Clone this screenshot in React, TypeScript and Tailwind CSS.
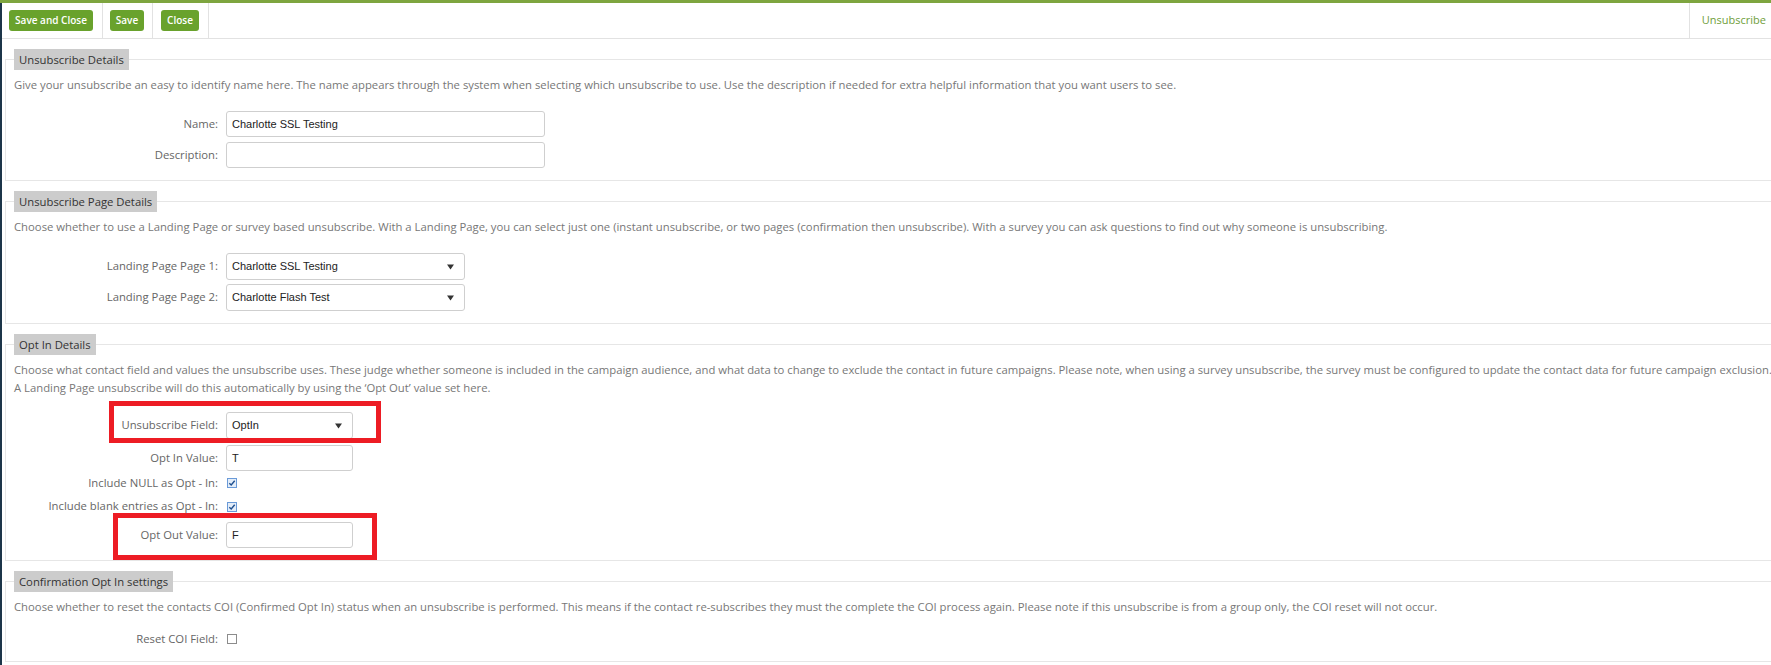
import { ReactNode } from 'react'
import clsx from 'clsx'

function ToolButton({ children, width }: { children: ReactNode; width: string }) {
    return (
        <button
            className={clsx(
                'h-[21px] rounded-[3px] bg-[#69a22c] text-center text-[10px] font-semibold leading-[21px] text-white',
                width
            )}
        >
            {children}
        </button>
    )
}

function Section({ title, children }: { title: string; children: ReactNode }) {
    return (
        <fieldset className="ml-[3px] mt-[10px] border border-r-0 border-[#e6e6e6] px-[8px] pb-[12px]">
            <legend className="h-[21px] bg-[#cccccc] px-[5px] text-[11.3px] leading-[21px] text-[#333]">
                {title}
            </legend>
            {children}
        </fieldset>
    )
}

function Row({
    label,
    children,
    className,
}: {
    label: string
    children: ReactNode
    className?: string
}) {
    return (
        <div className={clsx('relative grid grid-cols-[204px_auto] items-center gap-x-[8px]', className)}>
            <span className="whitespace-nowrap text-right text-[11.3px] text-[#666]">{label}</span>
            <div className="flex items-center">{children}</div>
        </div>
    )
}

function TextBox({ value, width }: { value?: string; width: string }) {
    return (
        <div
            className={clsx(
                'flex h-[26px] items-center rounded-[3px] border border-[#cfcfcf] bg-white px-[5px] font-["Liberation_Sans",Arial,sans-serif] text-[11px] text-[#222]',
                width
            )}
        >
            {value}
        </div>
    )
}

function SelectBox({ value, width }: { value: string; width: string }) {
    return (
        <div
            className={clsx(
                'flex h-[27px] items-center justify-between rounded-[3px] border border-[#cfcfcf] bg-white pl-[5px] pr-[10px] font-["Liberation_Sans",Arial,sans-serif] text-[11px] text-[#222]',
                width
            )}
        >
            <span>{value}</span>
            <svg width="7" height="6" viewBox="0 0 7 6">
                <path d="M0 0.5 H7 L3.5 5.5 Z" fill="#333" />
            </svg>
        </div>
    )
}

function CheckBox({ checked }: { checked?: boolean }) {
    return (
        <span
            className={clsx(
                'ml-[1px] inline-flex h-[10px] w-[10px] items-center justify-center border',
                checked ? 'border-[#6a9ad8] bg-[#e3edf9]' : 'border-[#8c8c8c] bg-white'
            )}
        >
            {checked && (
                <svg width="8" height="8" viewBox="0 0 8 8">
                    <path d="M1.3 4.2 L3.2 6 L6.7 1.8" stroke="#1f4f8f" strokeWidth="1.4" fill="none" />
                </svg>
            )}
        </span>
    )
}

function Desc({ children }: { children: ReactNode }) {
    return (
        <p className="mt-[6px] whitespace-nowrap text-[11.3px] leading-[18px] text-[#777]">{children}</p>
    )
}

export default function App() {
    return (
        <div className="w-[1771px] min-h-[665px] bg-white font-['Open_Sans',sans-serif]">
            <div className="h-[3px] bg-[#7ea53f]" />
            <div className="min-h-[662px] border-l-2 border-[#1c3549]">
                <div className="flex h-[36px] items-stretch border-b border-[#e2e2e2]">
                    <div className="flex items-center border-r border-[#e2e2e2] pl-[7px] pr-[9px]">
                        <ToolButton width="w-[84px]">Save and Close</ToolButton>
                    </div>
                    <div className="flex items-center border-r border-[#e2e2e2] pl-[7px] pr-[8px]">
                        <ToolButton width="w-[34px]">Save</ToolButton>
                    </div>
                    <div className="flex items-center border-r border-[#e2e2e2] pl-[8px] pr-[9px]">
                        <ToolButton width="w-[38px]">Close</ToolButton>
                    </div>
                    <div className="ml-auto flex items-center border-l border-[#e2e2e2] pl-[12px] pr-[5px] text-[11px] text-[#6f9e3a]">
                        Unsubscribe
                    </div>
                </div>

                <Section title="Unsubscribe Details">
                    <Desc>
                        Give your unsubscribe an easy to identify name here. The name appears through the system
                        when selecting which unsubscribe to use. Use the description if needed for extra helpful
                        information that you want users to see.
                    </Desc>
                    <div className="mt-[17px] flex flex-col gap-[5px]">
                        <Row label="Name:">
                            <TextBox value="Charlotte SSL Testing" width="w-[319px]" />
                        </Row>
                        <Row label="Description:">
                            <TextBox width="w-[319px]" />
                        </Row>
                    </div>
                </Section>

                <Section title="Unsubscribe Page Details">
                    <Desc>
                        Choose whether to use a Landing Page or survey based unsubscribe. With a Landing Page, you
                        can select just one (instant unsubscribe, or two pages (confirmation then unsubscribe). With
                        a survey you can ask questions to find out why someone is unsubscribing.
                    </Desc>
                    <div className="mt-[17px] flex flex-col gap-[4px]">
                        <Row label="Landing Page Page 1:">
                            <SelectBox value="Charlotte SSL Testing" width="w-[239px]" />
                        </Row>
                        <Row label="Landing Page Page 2:">
                            <SelectBox value="Charlotte Flash Test" width="w-[239px]" />
                        </Row>
                    </div>
                </Section>

                <Section title="Opt In Details">
                    <Desc>
                        Choose what contact field and values the unsubscribe uses. These judge whether someone is
                        included in the campaign audience, and what data to change to exclude the contact in future
                        campaigns. Please note, when using a survey unsubscribe, the survey must be configured to
                        update the contact data for future campaign exclusion.
                        <br />
                        A Landing Page unsubscribe will do this automatically by using the &lsquo;Opt Out&rsquo;
                        value set here.
                    </Desc>
                    <div className="mt-[15px] flex flex-col">
                        <Row label="Unsubscribe Field:">
                            <SelectBox value="OptIn" width="w-[127px]" />
                            <div className="pointer-events-none absolute left-[95px] top-[-11px] z-10 h-[42px] w-[272px] border-[5px] border-[#ed1c24]" />
                        </Row>
                        <Row label="Opt In Value:" className="mt-[6px]">
                            <TextBox value="T" width="w-[127px]" />
                        </Row>
                        <Row label="Include NULL as Opt - In:" className="h-[24px]">
                            <CheckBox checked />
                        </Row>
                        <Row label="Include blank entries as Opt - In:" className="h-[23px]">
                            <CheckBox checked />
                        </Row>
                        <Row label="Opt Out Value:" className="mt-[4px]">
                            <TextBox value="F" width="w-[127px]" />
                            <div className="pointer-events-none absolute left-[99px] top-[-9px] z-10 h-[47px] w-[264px] border-[5px] border-[#ed1c24]" />
                        </Row>
                    </div>
                </Section>

                <Section title="Confirmation Opt In settings">
                    <Desc>
                        Choose whether to reset the contacts COI (Confirmed Opt In) status when an unsubscribe is
                        performed. This means if the contact re-subscribes they must the complete the COI process
                        again. Please note if this unsubscribe is from a group only, the COI reset will not occur.
                    </Desc>
                    <Row label="Reset COI Field:" className="mt-[13px] h-[20px]">
                        <CheckBox />
                    </Row>
                </Section>
            </div>
        </div>
    )
}
